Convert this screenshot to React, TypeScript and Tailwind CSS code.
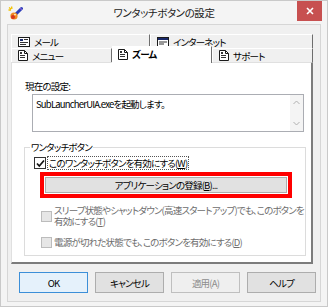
import React from 'react';

const AppIcon = () => (
  <svg width="15" height="15" viewBox="0 0 15 15">
    <path d="M1 1.5l2 1.5M3.5 0.5l0.5 2.5M0.5 4l2.5 0" stroke="#f2c200" strokeWidth="1.3" />
    <path d="M7.5 8.5L13.5 2.5" stroke="#2a3fb8" strokeWidth="3" strokeLinecap="round" />
    <path d="M12 2l2 2" stroke="#7a5cd6" strokeWidth="1.2" />
    <circle cx="6" cy="10" r="3.6" fill="#f08a22" />
    <circle cx="5" cy="11" r="2" fill="#d9361c" />
    <circle cx="7" cy="8.6" r="0.9" fill="#fff6d0" />
  </svg>
);

const DocIcon = () => (
  <svg width="10" height="11" viewBox="0 0 10 11" className="shrink-0">
    <path d="M0.5 0.5h6l3 3v7h-9z" fill="#fff" stroke="#1a1a1a" />
    <path d="M6.5 0.5v3h3" fill="none" stroke="#1a1a1a" />
    <path d="M2 5.5h5M2 7.5h5" stroke="#333" />
    <rect x="2" y="2" width="2" height="2" fill="#333" />
  </svg>
);

const CardIcon = ({ header }: { header?: boolean }) => (
  <svg width="12" height="10" viewBox="0 0 12 10" className="shrink-0">
    <rect x="0.5" y="0.5" width="11" height="9" fill="#fff" stroke="#1a1a1a" />
    {header ? (
      <>
        <rect x="1" y="1" width="10" height="2" fill="#1a2a6a" />
        <path d="M2 5h8M2 7h5" stroke="#333" />
      </>
    ) : (
      <>
        <rect x="2" y="2" width="3" height="2" fill="#1a2a6a" />
        <path d="M6 2.5h4M2 5.5h8M2 7.5h6" stroke="#333" />
      </>
    )}
  </svg>
);

const Check = () => (
  <svg width="9" height="9" viewBox="0 0 9 9">
    <path d="M1 4.5l2.3 2.5L8 1.5" fill="none" stroke="#111" strokeWidth="1.7" />
  </svg>
);

const Tab = ({ label, icon, w }: { label: string; icon: React.ReactNode; w: string }) => (
  <div
    className={`${w} h-full flex items-center gap-[4px] pl-[6px] bg-[#f0f0f0] border-t border-l border-white border-r border-r-[#6e6e6e]`}
  >
    {icon}
    <span>{label}</span>
  </div>
);

const Btn = ({
  label,
  primary,
  disabled,
}: {
  label: string;
  primary?: boolean;
  disabled?: boolean;
}) => (
  <div
    className={`w-[69px] h-[21px] flex items-center justify-center border ${
      primary ? 'border-[#3c8fd8] bg-[#e5f1fb]' : disabled ? 'border-[#bfbfbf] bg-[#efefef]' : 'border-[#adadad] bg-[#e1e1e1]'
    } ${disabled ? 'text-[#8d8d8d]' : 'text-black'}`}
  >
    {label}
  </div>
);

export default function App() {
  return (
    <div className="w-[328px] h-[307px] bg-[#f4f4f4] border border-[#c9c9c9] flex flex-col font-['Noto_Sans_CJK_JP',sans-serif] text-[9.5px] leading-[12px] tracking-[-0.8px] text-black [font-feature-settings:'palt']">
      {/* title bar */}
      <div className="relative h-[23px] flex items-center shrink-0">
        <div className="pl-[7px] pt-[1px]">
          <AppIcon />
        </div>
        <div className="absolute inset-x-0 top-[5px] text-center text-[10.5px] leading-[14px] tracking-[-0.4px] text-[#222]">
          ワンタッチボタンの設定
        </div>
        <div className="absolute right-[5px] top-0 w-[25px] h-[20px] bg-[#c75050] flex items-center justify-center">
          <svg width="8" height="8" viewBox="0 0 8 8">
            <path d="M1 1l6 6M7 1l-6 6" stroke="#fff" strokeWidth="1.6" />
          </svg>
        </div>
      </div>

      {/* client area */}
      <div className="mx-[6px] h-[278px] bg-[#f0f0f0] border border-[#d6d6d6] pt-[9px] pl-[3px] flex flex-col">
        {/* tabs row 1 */}
        <div className="flex h-[14px]">
          <Tab w="w-[139px]" label="メール" icon={<CardIcon />} />
          <Tab w="w-[163px]" label="インターネット" icon={<CardIcon header />} />
        </div>
        {/* tabs row 2 */}
        <div className="flex h-[14px] items-end">
          <Tab w="w-[101px]" label="メニュー" icon={<DocIcon />} />
          <div className="relative z-10 w-[100px] h-[17px] -mb-px flex items-center gap-[4px] pl-[5px] pb-[2px] bg-white border-t border-l border-white border-r border-r-[#6e6e6e] font-bold">
            <DocIcon />
            <span>ズーム</span>
          </div>
          <Tab w="w-[101px]" label="サポート" icon={<DocIcon />} />
        </div>

        {/* panel */}
        <div className="w-[302px] h-[202px] bg-white border-l border-t border-[#e0e0e0] border-r-2 border-b-2 border-r-[#7c7c7c] border-b-[#7c7c7c] pt-[17px] flex flex-col">
          <div className="ml-[13px]">現在の設定:</div>
          <div className="ml-[20px] mt-[2px] w-[272px] h-[38px] border border-[#abadb3] flex">
            <div className="flex-1 pl-[3px] pt-[3px]">SubLauncherUIA.exeを起動します。</div>
            <div className="w-[13px] h-full bg-[#f4f4f4] flex flex-col items-center justify-between py-[5px]">
              <svg width="7" height="5" viewBox="0 0 7 5">
                <path d="M0.5 4l3-3 3 3" fill="none" stroke="#b0b0b0" />
              </svg>
              <svg width="7" height="5" viewBox="0 0 7 5">
                <path d="M0.5 1l3 3 3-3" fill="none" stroke="#b0b0b0" />
              </svg>
            </div>
          </div>

          {/* group box */}
          <div className="ml-[12px] mt-[15px] w-[282px] h-[109px] border border-[#dcdcdc] flex flex-col">
            <div className="-mt-[7px] ml-[5px] px-[1px] bg-white w-fit">ワンタッチボタン</div>
            <div className="mt-[3px] ml-[9px] flex items-center gap-[1px]">
              <div className="w-[12px] h-[12px] border border-[#333] bg-white flex items-center justify-center">
                <Check />
              </div>
              <div className="border border-dotted border-[#555] px-[1px] h-[14px] flex items-center">
                このワンタッチボタンを有効にする(<span className="underline">W</span>)
              </div>
            </div>
            <div className="mt-[2px] ml-[15px] w-[252px] h-[26px] border-[4px] border-[#ff0000] p-[1px]">
              <div className="h-full border border-[#adadad] bg-[#e1e1e1] flex items-center justify-center">
                アプリケーションの登録(<span className="underline">B</span>)...
              </div>
            </div>
            <div className="mt-[7px] ml-[16px] flex items-center gap-[2px] text-[#6d6d6d]">
              <div className="w-[11px] h-[11px] border border-[#bcbcbc] bg-[#e6e6e6] shrink-0" />
              <div className="leading-[11px] whitespace-nowrap">
                スリープ状態やシャットダウン(高速スタートアップ)でも、このボタンを
                <br />
                有効にする(<span className="underline">T</span>)
              </div>
            </div>
            <div className="mt-[9px] ml-[16px] flex items-center gap-[2px] text-[#6d6d6d]">
              <div className="w-[11px] h-[11px] border border-[#bcbcbc] bg-[#e6e6e6] shrink-0" />
              <div>
                電源が切れた状態でも、このボタンを有効にする(<span className="underline">D</span>)
              </div>
            </div>
          </div>
        </div>

        {/* bottom buttons */}
        <div className="mt-[8px] ml-[8px] flex gap-[7px]">
          <Btn label="OK" primary />
          <Btn label="キャンセル" />
          <Btn label="適用(A)" disabled />
          <Btn label="ヘルプ" />
        </div>
      </div>
    </div>
  );
}
